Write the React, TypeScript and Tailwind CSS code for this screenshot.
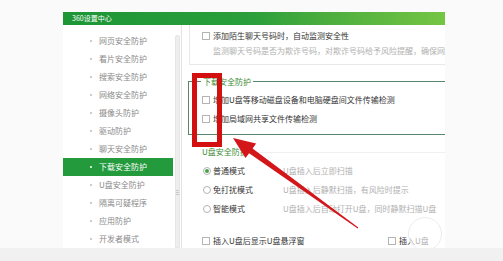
import React from "react";

const font = { fontFamily: '"Noto Sans CJK SC", "Noto Sans", sans-serif' };

function Checkbox() {
  return <span className="inline-block w-[8px] h-[8px] border border-[#b4b4b4] bg-white shrink-0" />;
}

function Radio({ checked }: { checked?: boolean }) {
  return (
    <span className="w-[8px] h-[8px] rounded-full border border-[#b4b4b4] bg-white shrink-0 flex items-center justify-center">
      {checked && <span className="w-[4px] h-[4px] rounded-full bg-[#4aa04a]" />}
    </span>
  );
}

const items = [
  "网页安全防护",
  "看片安全防护",
  "搜索安全防护",
  "网络安全防护",
  "摄像头防护",
  "驱动防护",
  "聊天安全防护",
  "下载安全防护",
  "U盘安全防护",
  "隔离可疑程序",
  "应用防护",
  "开发者模式",
];

export default function App() {
  return (
    <div className="relative w-[503px] h-[261px] bg-[#fafafa] flex flex-col overflow-hidden text-[8px] leading-none" style={font}>
      <div className="h-[12px] shrink-0" />
      <div className="h-[236px] shrink-0 flex">
        <div className="w-[63px] shrink-0" />
        <div className="relative w-[382px] shrink-0 flex flex-col bg-white overflow-hidden">
          <div className="h-[13px] shrink-0 bg-gradient-to-r from-[#1d9636] via-[#2a9f3b] to-[#74c543] flex items-center pl-[9px] text-white text-[7px]">
            360设置中心
          </div>
          <div className="flex-1 flex min-h-0">
            {/* sidebar */}
            <div className="w-[110px] shrink-0 flex flex-col pt-[7px]">
              {items.map((t) => {
                const sel = t === "下载安全防护";
                return (
                  <div
                    key={t}
                    className={
                      "h-[18px] flex items-center " +
                      (sel ? "bg-[#239a3c] text-white" : "text-[#8a8a8a]")
                    }
                  >
                    <span className={"ml-[27px] w-[2px] h-[2px] rounded-full " + (sel ? "bg-white" : "bg-[#bbbbbb]")} />
                    <span className="ml-[7px]">{t}</span>
                  </div>
                );
              })}
            </div>
            {/* scrollbar */}
            <div className="w-[9px] shrink-0 border-r border-[#e2e2e2] flex pt-[10px] pl-[2px]">
              <div className="w-[5px] h-full bg-[#eeeeee] rounded-t-[2px] border border-[#e6e6e6] flex flex-col items-center pt-[154px] gap-[1px]">
                <span className="w-[3px] h-px bg-[#c8c8c8]" />
                <span className="w-[3px] h-px bg-[#c8c8c8]" />
                <span className="w-[3px] h-px bg-[#c8c8c8]" />
              </div>
            </div>
            {/* content */}
            <div className="flex-1 min-w-0 overflow-hidden flex flex-col pl-[6px] text-[#333]">
              <div className="ml-px h-[40px] w-[300px] shrink-0 border-l border-b border-[#e8e8e8] pl-[12px] flex flex-col">
                <div className="mt-[5px] h-[12px] flex items-center gap-[3px] whitespace-nowrap">
                  <Checkbox />
                  <span>添加陌生聊天号码时，自动监测安全性</span>
                </div>
                <div className="mt-[3px] h-[12px] flex items-center pl-[11px] whitespace-nowrap text-[#b0b0b0]">
                  监测聊天号码是否为欺诈号码，对欺诈号码给予风险提醒，确保网购安全
                </div>
              </div>
              <div className="relative mt-[16px] h-[54px] w-[300px] shrink-0 border-t border-l border-b border-[#58876a] pl-[13px] flex flex-col">
                <span className="absolute left-[12px] top-[-6px] h-[12px] px-[2px] bg-white flex items-center text-[#3b8c35]">
                  下载安全防护
                </span>
                <div className="mt-[12px] h-[12px] flex items-center gap-[3px] whitespace-nowrap">
                  <Checkbox />
                  <span>增加U盘等移动磁盘设备和电脑硬盘间文件传输检测</span>
                </div>
                <div className="mt-[7px] h-[12px] flex items-center gap-[3px] whitespace-nowrap">
                  <Checkbox />
                  <span>增加局域网共享文件传输检测</span>
                </div>
              </div>
              <div className="mt-[11px] h-[12px] shrink-0 flex items-center pl-[14px] gap-[6px]">
                <span className="text-[#3b8c35] whitespace-nowrap">U盘安全防护</span>
                <span className="flex-1 h-px bg-[#f0f0f0]" />
              </div>
              {[
                ["普通模式", "U盘插入后立即扫描", true],
                ["免打扰模式", "U盘插入后静默扫描，有风险时提示", false],
                ["智能模式", "U盘插入后自动打开U盘，同时静默扫描U盘", false],
              ].map(([a, b, c]) => (
                <div key={a as string} className="mt-[7px] h-[12px] shrink-0 flex items-center pl-[15px] whitespace-nowrap">
                  <Radio checked={c as boolean} />
                  <span className="ml-[2px] w-[70px]">{a}</span>
                  <span className="text-[#b0b0b0]">{b}</span>
                </div>
              ))}
              <div className="mt-[20px] h-[12px] shrink-0 flex items-center pl-[14px] whitespace-nowrap">
                <Checkbox />
                <span className="ml-[3px] w-[175px]">插入U盘后显示U盘悬浮窗</span>
                <Checkbox />
                <span className="ml-[3px]">插入U盘</span>
              </div>
            </div>
          </div>
          {/* faint watermark circle */}
          <div className="absolute left-[345px] top-[205px] w-[34px] h-[34px] rounded-full border border-[#ececec] bg-white/60" />
        </div>
      </div>
      <div className="flex-1 bg-[#f1f1f1]" />

      {/* red highlight box */}
      <div className="absolute left-[192px] top-[73px] w-[30px] h-[74px] border-[5px] border-[#d30f0f]" />

      {/* red arrow */}
      <svg className="absolute left-0 top-0" width="503" height="261" viewBox="0 0 503 261">
        <polygon
          points="233,138 256.1,143.5 252.6,148.4 358.3,227.6 357.7,228.4 249.1,153.2 245.5,158.1"
          fill="#d3161a"
        />
      </svg>
    </div>
  );
}
